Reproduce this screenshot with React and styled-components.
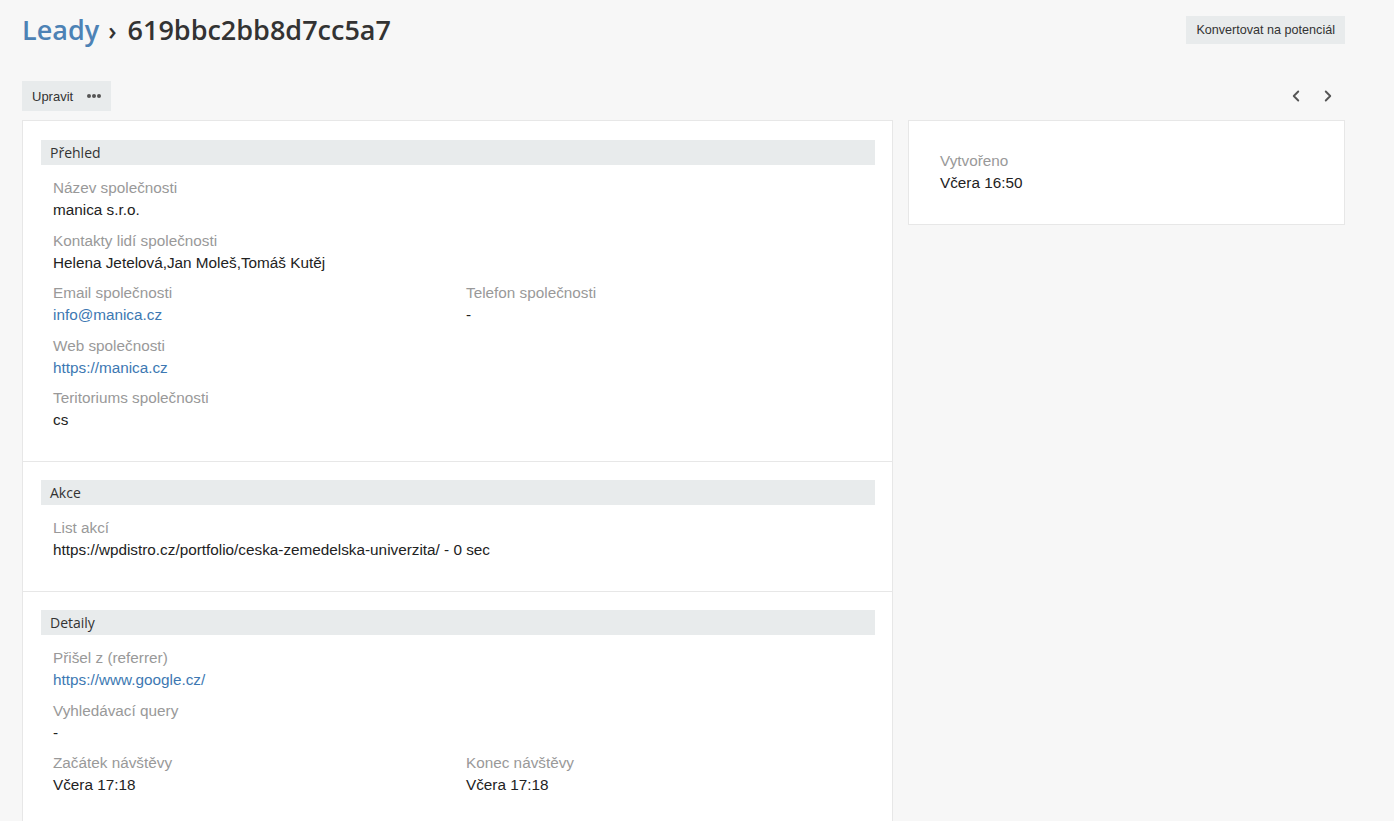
import React from 'react';
import styled, { createGlobalStyle } from 'styled-components';
import { ChevronLeft, ChevronRight } from 'lucide-react';

const GlobalStyle = createGlobalStyle`
  html, body {
    margin: 0;
    padding: 0;
    background: #f7f7f7;
    font-family: "Liberation Sans", Arial, sans-serif;
    color: #222;
  }
  * { box-sizing: border-box; }
`;

const Page = styled.div`
  padding: 0 49px 0 22px;
  height: 821px;
  overflow: hidden;
`;

const Header = styled.div`
  display: flex;
  justify-content: space-between;
  align-items: flex-start;
  padding-top: 10px;
  height: 81px;
`;

const Title = styled.h1`
  margin: 0;
  font-family: "Open Sans", sans-serif;
  font-size: 27px;
  font-weight: 600;
  line-height: 40px;
  color: #333;
`;

const Crumb = styled.a`
  color: #4d82b5;
  text-decoration: none;
`;

const Sep = styled.span`
  margin: 0 11px 0 9px;
  font-size: 25px;
`;

const Button = styled.button`
  display: inline-flex;
  align-items: center;
  gap: 14px;
  height: ${p => p.$tall ? '28px' : '30px'};
  padding: 0 10px;
  border: none;
  border-radius: 0;
  background: #e8ebec;
  color: #333;
  font-family: "Liberation Sans", Arial, sans-serif;
  font-size: ${p => p.$tall ? '12.6px' : '13px'};
  cursor: pointer;
`;

const HeaderButton = styled(Button)`
  margin-top: 6px;
`;

const Dots = styled.span`
  display: inline-flex;
  gap: 1px;
`;

const Dot = styled.i`
  width: 4px;
  height: 4px;
  border-radius: 50%;
  background: #555;
`;

const Toolbar = styled.div`
  display: flex;
  justify-content: space-between;
  align-items: center;
  height: 30px;
  margin-bottom: 9px;
`;

const Nav = styled.div`
  display: flex;
  gap: 14px;
  padding-right: 8px;
  color: #555;
`;

const Grid = styled.div`
  display: grid;
  grid-template-columns: 871px 437px;
  gap: 15px;
  align-items: start;
`;

const Panel = styled.div`
  background: #fff;
  border: 1px solid #e7e7e7;
`;

const Section = styled.section`
  padding: 18px 17px 21.5px 18px;
  border-bottom: 1px solid #e7e7e7;
  &:first-child { padding-top: 19px; }
  &:last-child { border-bottom: none; }
`;

const SectionTitle = styled.div`
  height: 25px;
  line-height: 25px;
  padding-left: 9px;
  background: #e8ebec;
  font-family: "Open Sans", sans-serif;
  font-size: 14px;
  color: #333;
  margin-bottom: 12px;
`;

const Fields = styled.div`
  display: grid;
  grid-template-columns: 413px 1fr;
  padding: ${p => p.$plain ? '10px 13px 0' : '0 12px'};
`;

const Field = styled.div`
  grid-column: ${p => p.$half ? 'auto' : '1 / -1'};
  margin-bottom: 8.5px;
`;

const Label = styled.div`
  font-size: 15.3px;
  line-height: 22px;
  color: #999;
`;

const Value = styled.div`
  font-size: 15.3px;
  line-height: 22px;
  color: #222;
`;

const Link = styled.a`
  color: #3d78b2;
  text-decoration: none;
`;

const sections = [
  {
    title: 'Přehled',
    fields: [
      { label: 'Název společnosti', value: 'manica s.r.o.' },
      { label: 'Kontakty lidí společnosti', value: 'Helena Jetelová,Jan Moleš,Tomáš Kutěj' },
      { label: 'Email společnosti', value: 'info@manica.cz', link: true, half: true },
      { label: 'Telefon společnosti', value: '-', half: true },
      { label: 'Web společnosti', value: 'https://manica.cz', link: true },
      { label: 'Teritoriums společnosti', value: 'cs' },
    ],
  },
  {
    title: 'Akce',
    fields: [
      { label: 'List akcí', value: 'https://wpdistro.cz/portfolio/ceska-zemedelska-univerzita/ - 0 sec' },
    ],
  },
  {
    title: 'Detaily',
    fields: [
      { label: 'Přišel z (referrer)', value: 'https://www.google.cz/', link: true },
      { label: 'Vyhledávací query', value: '-' },
      { label: 'Začátek návštěvy', value: 'Včera 17:18', half: true },
      { label: 'Konec návštěvy', value: 'Včera 17:18', half: true },
    ],
  },
];

function FieldItem({ label, value, link, half }) {
  return (
    <Field $half={half}>
      <Label>{label}</Label>
      <Value>{link ? <Link href="#">{value}</Link> : value}</Value>
    </Field>
  );
}

export default function App() {
  return (
    <Page>
      <GlobalStyle />
      <Header>
        <Title>
          <Crumb href="#">Leady</Crumb>
          <Sep>›</Sep>
          619bbc2bb8d7cc5a7
        </Title>
        <HeaderButton $tall>Konvertovat na potenciál</HeaderButton>
      </Header>
      <Toolbar>
        <Button>
          Upravit
          <Dots><Dot /><Dot /><Dot /></Dots>
        </Button>
        <Nav>
          <ChevronLeft size={18} strokeWidth={2.5} />
          <ChevronRight size={18} strokeWidth={2.5} />
        </Nav>
      </Toolbar>
      <Grid>
        <Panel>
          {sections.map(s => (
            <Section key={s.title}>
              <SectionTitle>{s.title}</SectionTitle>
              <Fields>
                {s.fields.map(f => <FieldItem key={f.label} {...f} />)}
              </Fields>
            </Section>
          ))}
        </Panel>
        <Panel>
          <Section>
            <Fields $plain>
              <FieldItem label="Vytvořeno" value="Včera 16:50" />
            </Fields>
          </Section>
        </Panel>
      </Grid>
    </Page>
  );
}
